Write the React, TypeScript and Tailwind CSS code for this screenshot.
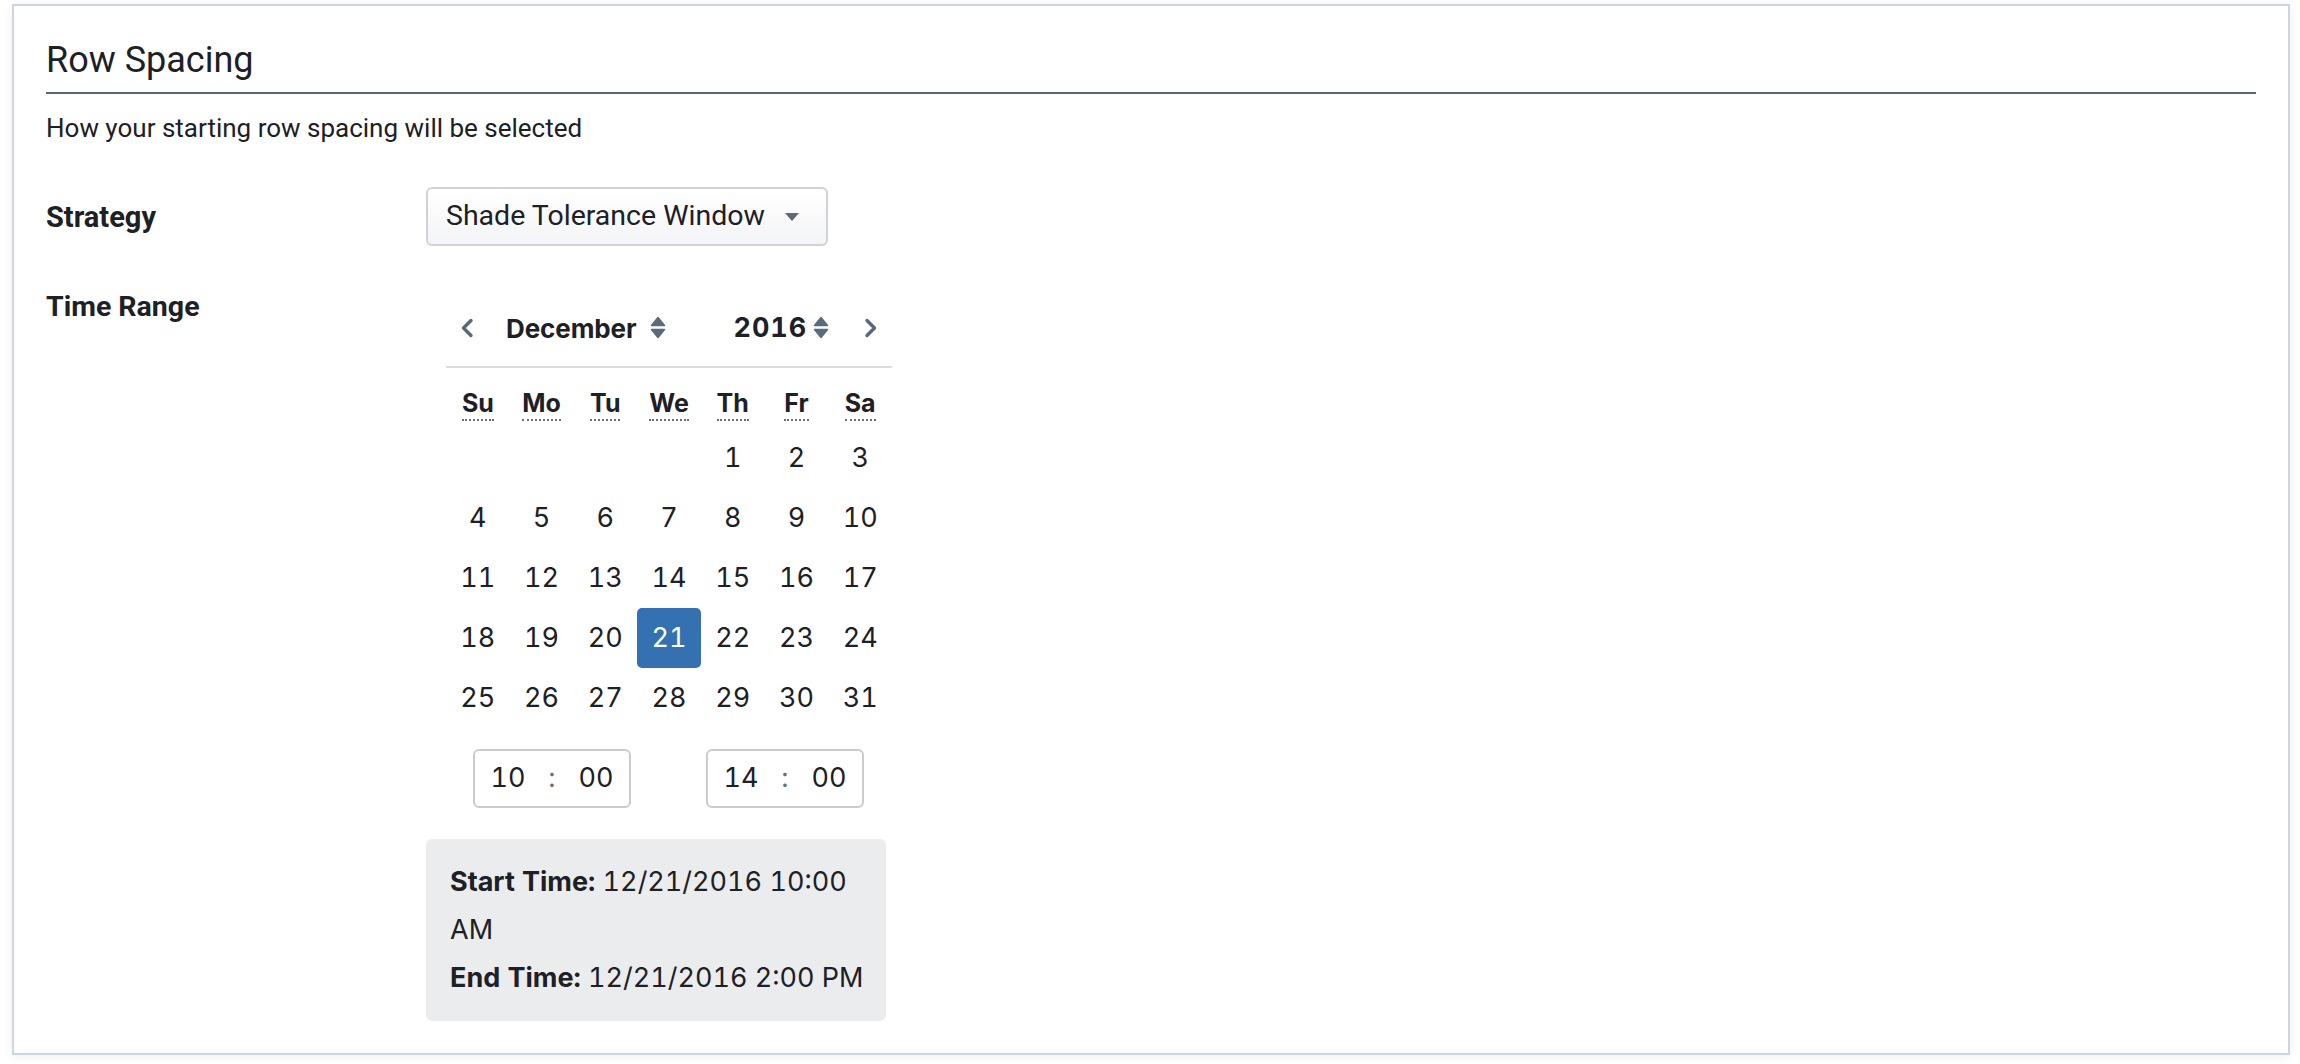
import React from "react";

const WEEKDAYS = [
  { short: "Su", full: "Sunday" },
  { short: "Mo", full: "Monday" },
  { short: "Tu", full: "Tuesday" },
  { short: "We", full: "Wednesday" },
  { short: "Th", full: "Thursday" },
  { short: "Fr", full: "Friday" },
  { short: "Sa", full: "Saturday" },
];

// December 2016 starts on a Thursday
const CELLS: (number | null)[] = [
  null, null, null, null, 1, 2, 3,
  4, 5, 6, 7, 8, 9, 10,
  11, 12, 13, 14, 15, 16, 17,
  18, 19, 20, 21, 22, 23, 24,
  25, 26, 27, 28, 29, 30, 31,
];

const SELECTED = 21;

function Chevron({ dir }: { dir: "left" | "right" }) {
  return (
    <svg width="14" height="20" viewBox="0 0 14 20" aria-hidden="true">
      <path
        d={dir === "left" ? "M11 2.5 L3.5 10 L11 17.5" : "M3 2.5 L10.5 10 L3 17.5"}
        fill="none"
        stroke="#59687a"
        strokeWidth="3.4"
        strokeLinecap="round"
        strokeLinejoin="round"
      />
    </svg>
  );
}

function SortIcon() {
  return (
    <svg width="16" height="24" viewBox="0 0 16 24" aria-hidden="true">
      <path
        d="M8 1.5 L14.5 9.5 L1.5 9.5 Z"
        fill="#5b6b7b"
        stroke="#5b6b7b"
        strokeWidth="1.5"
        strokeLinejoin="round"
      />
      <path
        d="M1.5 13.5 L14.5 13.5 L8 21.5 Z"
        fill="#5b6b7b"
        stroke="#5b6b7b"
        strokeWidth="1.5"
        strokeLinejoin="round"
      />
    </svg>
  );
}

function TimeBox({ h, m }: { h: string; m: string }) {
  return (
    <div className="flex h-[59px] w-[158px] items-center rounded-[6px] border-2 border-[#cbcbcb] bg-white text-[27px] text-[#1d2025] tabular-nums">
      <span className="w-[66px] text-center">{h}</span>
      <span className="w-[22px] text-center text-[#6b6f74]">:</span>
      <span className="w-[66px] text-center">{m}</span>
    </div>
  );
}

function Calendar() {
  return (
    <div className="ml-[20px] w-[446px] [font-family:Inter,sans-serif] text-[#1d2025]">
      {/* month / year navigation */}
      <div className="flex h-[78px] items-center border-b-2 border-[#dcdcdc] px-[14px]">
        <Chevron dir="left" />
        <div className="ml-[32px] flex items-center gap-[14px]">
          <span className="text-[26px] font-bold tracking-[-0.1px]">December</span>
          <SortIcon />
        </div>
        <div className="ml-[67px] flex items-center gap-[6px]">
          <span className="text-[27px] font-bold tracking-[1px] tabular-nums">2016</span>
          <SortIcon />
        </div>
        <div className="ml-auto">
          <Chevron dir="right" />
        </div>
      </div>

      {/* weekday headings */}
      <div className="grid grid-cols-7">
        {WEEKDAYS.map((d) => (
          <div key={d.short} className="flex h-[60px] justify-center pt-[20px]">
            <abbr
              title={d.full}
              className="inline-block self-start border-b-2 border-dotted border-[#6f6f6f] text-[25px] font-bold leading-[31px] no-underline"
            >
              {d.short}
            </abbr>
          </div>
        ))}
      </div>

      {/* day grid */}
      <div className="grid grid-cols-7">
        {CELLS.map((n, i) => (
          <div key={i} className="flex h-[60px] items-center justify-center">
            {n !== null &&
              (n === SELECTED ? (
                <span className="flex h-[60px] w-full items-center justify-center rounded-[5px] bg-[#3571b0] text-[27px] text-white tabular-nums">
                  {n}
                </span>
              ) : (
                <span className="text-[27px] tabular-nums">{n}</span>
              ))}
          </div>
        ))}
      </div>

      {/* start / end hours */}
      <div className="mt-[21px] flex gap-[75px] pl-[27px]">
        <TimeBox h="10" m="00" />
        <TimeBox h="14" m="00" />
      </div>
    </div>
  );
}

export default function App() {
  return (
    <div className="min-h-screen bg-white pb-[9px] pl-[12px] pr-[10px] pt-[4px]">
      <div className="border-2 border-[#cdd6e0] bg-white px-[32px] py-[32px] text-[#1d2025] shadow-[0_2px_10px_rgba(30,41,59,0.07)] [font-family:Roboto,sans-serif]">
        <h2 className="border-b-2 border-[#5a6570] pb-[10px] text-[36px] leading-[44px] font-normal">
          Row Spacing
        </h2>

        <p className="mt-[18px] text-[26px] leading-[32px]">
          How your starting row spacing will be selected
        </p>

        <div className="mt-[43px] flex items-center">
          <div className="w-[380px] text-[29px] font-bold leading-[34px]">Strategy</div>
          <button
            type="button"
            className="flex h-[59px] w-[402px] items-center justify-between rounded-[6px] border-2 border-[#cfd3d8] bg-gradient-to-b from-white to-[#f3f4f6] pl-[18px] pr-[27px] text-[28.5px] text-[#1d2025]"
          >
            <span>Shade Tolerance Window</span>
            <svg width="14" height="8" viewBox="0 0 14 8" aria-hidden="true">
              <path d="M0 0 H14 L7 8 Z" fill="#5b6773" />
            </svg>
          </button>
        </div>

        <div className="mt-[44px] flex items-start">
          <div className="w-[380px] text-[28.5px] font-bold leading-[34px]">Time Range</div>
          <div className="flex flex-col">
            <Calendar />
            <div className="mt-[31px] w-[460px] rounded-[6px] bg-[#ebecee] py-[19px] pl-[24px] pr-[12px] text-[27px] leading-[48px] text-[#1d2025] tabular-nums [font-family:Inter,sans-serif]">
              <p>
                <span className="font-bold">Start Time:</span> 12/21/2016 10:00 AM
              </p>
              <p>
                <span className="font-bold">End Time:</span> 12/21/2016 2:00 PM
              </p>
            </div>
          </div>
        </div>
      </div>
    </div>
  );
}
